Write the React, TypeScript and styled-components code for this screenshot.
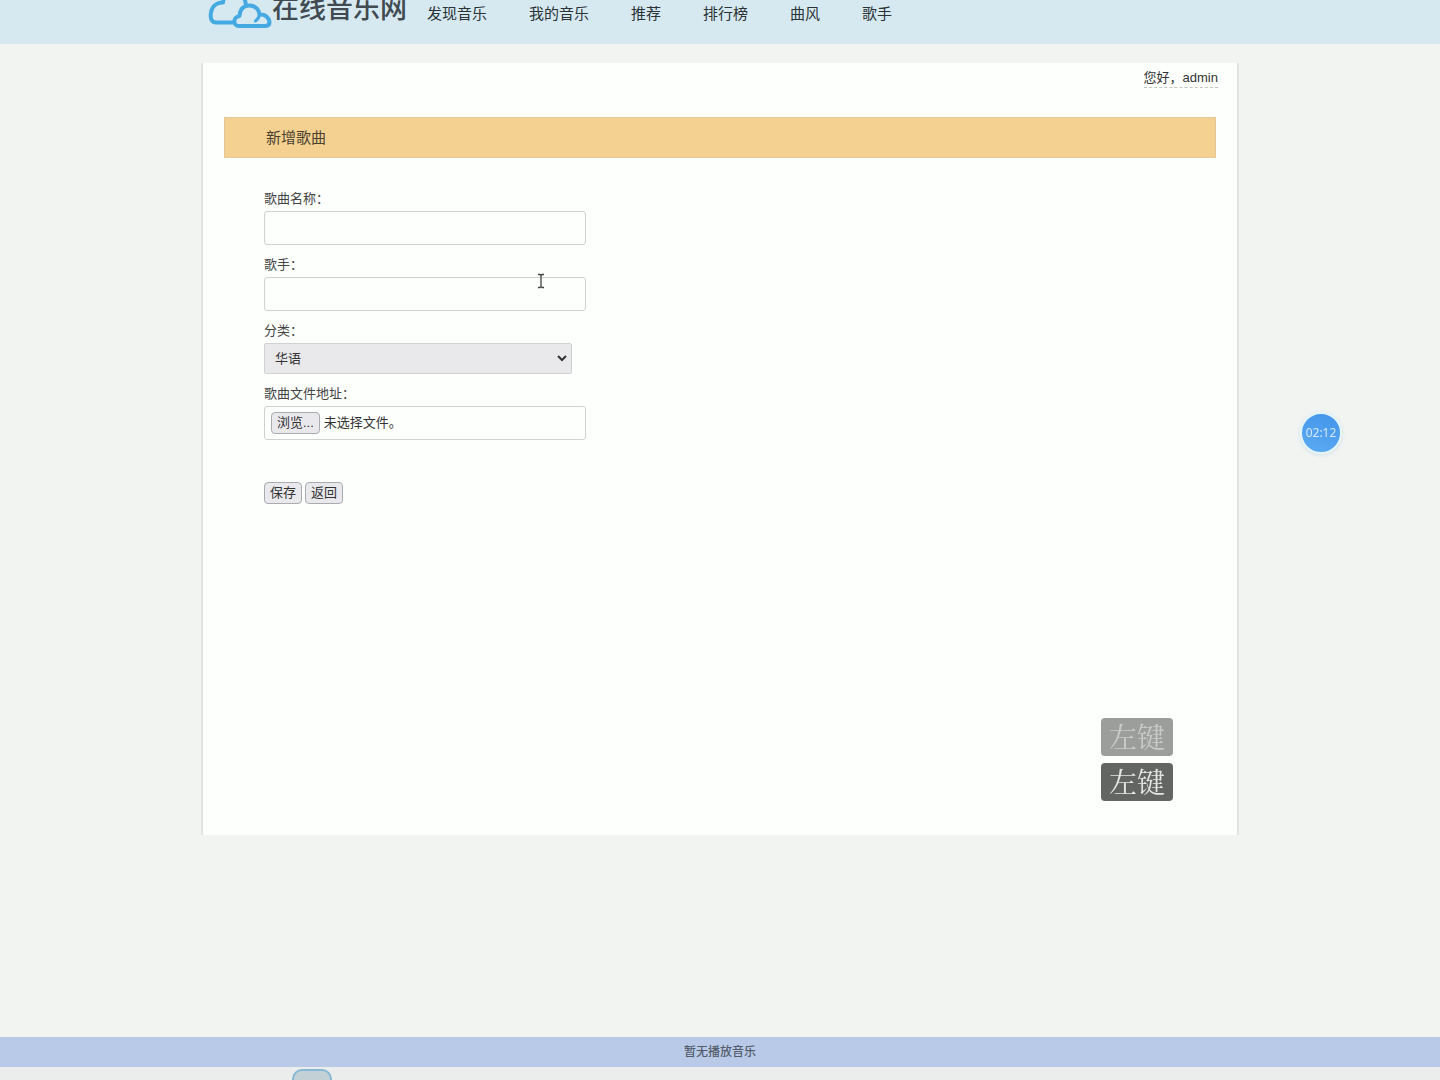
import React, { useRef, useState } from "react";
import styled, { createGlobalStyle } from "styled-components";

const GlobalStyle = createGlobalStyle`
  *, *::before, *::after { box-sizing: border-box; }
  body {
    margin: 0;
    background: #f2f4f2;
    color: #333;
    font-family: "Liberation Sans", "Noto Sans CJK SC", sans-serif;
    font-size: 13px;
    line-height: 20px;
  }
  button, input, select { font: inherit; color: inherit; }
`;

const Page = styled.div`
  display: flex;
  flex-direction: column;
  min-height: 100vh;
`;

const Header = styled.header`
  height: 44px;
  overflow: hidden;
  background: #d6e9f1;
`;

const HeaderInner = styled.div`
  display: flex;
  align-items: flex-start;
  width: 100%;
  max-width: 1036px;
  margin: 0 auto;
  padding-left: 6px;
`;

const Logo = styled.a`
  display: flex;
  align-items: flex-start;
  color: #404a50;
  text-decoration: none;
`;

const LogoText = styled.span`
  font-size: 27px;
  font-weight: 500;
  line-height: 18px;
  white-space: nowrap;
`;

const Nav = styled.nav`
  display: flex;
  gap: 42px;
  margin-left: 20px;
`;

const NavLink = styled.a`
  color: #2b3336;
  font-size: 15px;
  line-height: 28px;
  text-decoration: none;
  white-space: nowrap;
`;

const Main = styled.main`
  flex: 1;
  padding: 19px 0;
`;

const Card = styled.section`
  width: 100%;
  max-width: 1038px;
  min-height: 772px;
  margin: 0 auto;
  padding: 6px 21px 20px;
  border: solid #e2e3e2;
  border-width: 0 2px;
  background: #fdfffd;
`;

const UserBar = styled.div`
  display: flex;
  justify-content: flex-end;
  margin-right: -2px;
`;

const UserLink = styled.a`
  border-bottom: 1px dashed #c4c6c4;
  color: #333;
  line-height: 18px;
  text-decoration: none;
`;

const Title = styled.h1`
  margin: 29px 0 0;
  padding: 0 41px;
  border: 1px solid #e3c998;
  background: #f4d190;
  color: #4a4030;
  font-size: 15px;
  font-weight: 400;
  line-height: 39px;
`;

const Form = styled.form`
  display: flex;
  flex-direction: column;
  align-items: flex-start;
  gap: 10px;
  padding: 31px 40px;
`;

const Field = styled.div`
  display: flex;
  flex-direction: column;
  gap: 2px;
`;

const Label = styled.label`
  color: #444;
`;

const TextInput = styled.input`
  width: 322px;
  height: 34px;
  padding: 0 10px;
  border: 1px solid #d0d2d0;
  border-radius: 3px;
  background: #fdfffd;
`;

const SelectWrap = styled.div`
  display: grid;
  align-items: center;
  width: 308px;
  > * { grid-area: 1 / 1; }
  > svg { justify-self: end; margin-right: 5px; pointer-events: none; }
`;

const Select = styled.select`
  appearance: none;
  width: 100%;
  height: 31px;
  padding: 0 10px;
  border: 1px solid #d0d2d2;
  border-radius: 2px;
  background: #e9e9ec;
`;

const FileBox = styled.div`
  display: flex;
  align-items: center;
  gap: 4px;
  width: 322px;
  height: 34px;
  padding: 0 6px;
  border: 1px solid #d0d2d0;
  border-radius: 3px;
`;

const HiddenFile = styled.input`
  display: none;
`;

const Button = styled.button`
  height: 22px;
  padding: 0 5px;
  border: 1px solid #a9abb0;
  border-radius: 4px;
  background: #e9e9ed;
  line-height: 20px;
`;

const Actions = styled.div`
  display: flex;
  gap: 3px;
  margin-top: 32px;
`;

const Player = styled.footer`
  background: #b8cae8;
  color: #555d6b;
  font-size: 12px;
  font-weight: 500;
  line-height: 30px;
  text-align: center;
`;

const Dock = styled.div`
  height: 13px;
  padding: 2px 0 0 292px;
  overflow: hidden;
  background: #ebedec;
`;

const DockItem = styled.div`
  width: 40px;
  height: 30px;
  border: 2px solid #84b9d6;
  border-radius: 10px;
  background: #c3d0d6;
`;

const KeyHints = styled.div`
  position: fixed;
  right: 267px;
  top: 718px;
  display: grid;
  gap: 7px;
`;

const KeyHint = styled.div<{ $faded?: boolean }>`
  padding: 0 8px 2px;
  border-radius: 4px;
  background: ${(p) => (p.$faded ? "#9c9e9c" : "#636563")};
  color: ${(p) => (p.$faded ? "#c9cbc9" : "#e4e6e4")};
  font-family: "Noto Serif CJK SC", "Noto Sans CJK SC", serif;
  font-size: 28px;
  font-weight: 400;
  line-height: 36px;
`;

const Timer = styled.div`
  position: fixed;
  right: 98px;
  top: 412px;
  width: 42px;
  border: 2px solid #e4f6fc;
  border-radius: 50%;
  background: linear-gradient(20deg, #5cabf2, #4394ea);
  box-shadow: 0 1px 4px #cfe0e8;
  color: #d2eafc;
  font-family: "Noto Sans", sans-serif;
  font-size: 12px;
  line-height: 38px;
  text-align: center;
`;

const TextCursor = styled.svg`
  position: fixed;
  left: 537px;
  top: 273px;
  pointer-events: none;
`;

const navItems = ["发现音乐", "我的音乐", "推荐", "排行榜", "曲风", "歌手"];
const genres = ["华语", "欧美", "日韩"];

function CloudLogo() {
  return (
    <svg width="64" height="30" viewBox="0 0 64 30" fill="none" stroke="#45a9e2" strokeWidth="4" strokeLinecap="round" strokeLinejoin="round" aria-hidden="true">
      <path d="M25 22.500H8C3.500 22.500 2 18 3 12.500C4 6 9 2.500 15 2.500C15 -7 32 -11 37 0L38 5" />
      <path d="M31 26C25 26 24.500 17 31.500 16C32 8 37 5 42 5.500C48 6 51 10 51.500 14.500C57 14 61 17.500 61.500 22C61.500 25 59.500 26 57 26H31" />
      <path d="M51.500 14.500C51 18 49.500 19.500 47.500 21" strokeWidth="3" />
    </svg>
  );
}

export default function App() {
  const fileRef = useRef<HTMLInputElement>(null);
  const [fileName, setFileName] = useState("未选择文件。");

  return (
    <Page>
      <GlobalStyle />
      <Header>
        <HeaderInner>
          <Logo href="#">
            <CloudLogo />
            <LogoText>在线音乐网</LogoText>
          </Logo>
          <Nav>
            {navItems.map((item) => (
              <NavLink key={item} href="#">{item}</NavLink>
            ))}
          </Nav>
        </HeaderInner>
      </Header>

      <Main>
        <Card>
          <UserBar>
            <UserLink href="#">您好，admin</UserLink>
          </UserBar>
          <Title>新增歌曲</Title>
          <Form onSubmit={(e) => e.preventDefault()}>
            <Field>
              <Label htmlFor="song">歌曲名称：</Label>
              <TextInput id="song" type="text" />
            </Field>
            <Field>
              <Label htmlFor="singer">歌手：</Label>
              <TextInput id="singer" type="text" />
            </Field>
            <Field>
              <Label htmlFor="genre">分类：</Label>
              <SelectWrap>
                <Select id="genre">
                  {genres.map((g) => (
                    <option key={g}>{g}</option>
                  ))}
                </Select>
                <svg width="10" height="7" viewBox="0 0 10 7" fill="none" stroke="#333" strokeWidth="2" aria-hidden="true">
                  <path d="M1 1L5 5L9 1" />
                </svg>
              </SelectWrap>
            </Field>
            <Field>
              <Label htmlFor="file">歌曲文件地址：</Label>
              <FileBox>
                <HiddenFile
                  id="file"
                  type="file"
                  ref={fileRef}
                  onChange={(e) => setFileName(e.target.files?.[0]?.name ?? "未选择文件。")}
                />
                <Button type="button" onClick={() => fileRef.current?.click()}>浏览...</Button>
                <span>{fileName}</span>
              </FileBox>
            </Field>
            <Actions>
              <Button type="submit">保存</Button>
              <Button type="button">返回</Button>
            </Actions>
          </Form>
        </Card>
      </Main>

      <Player>暂无播放音乐</Player>
      <Dock>
        <DockItem />
      </Dock>

      <KeyHints>
        <KeyHint $faded>左键</KeyHint>
        <KeyHint>左键</KeyHint>
      </KeyHints>
      <Timer>02:12</Timer>
      <TextCursor width="8" height="16" viewBox="0 0 8 16" fill="none" stroke="#444" strokeWidth="1.300" aria-hidden="true">
        <path d="M1 1.500H3L4 2.500L5 1.500H7M4 2.500V13.500M1 14.500H3L4 13.500L5 14.500H7" />
      </TextCursor>
    </Page>
  );
}
